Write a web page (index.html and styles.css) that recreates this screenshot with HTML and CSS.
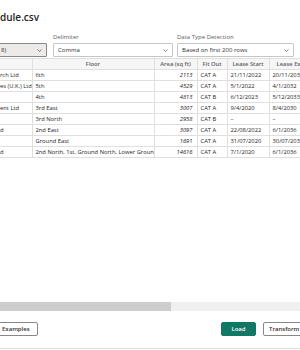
FILE: index.html
```html
<!DOCTYPE html>
<html lang="en">

<head>
    <meta charset="UTF-8">
    <meta name="viewport" content="width=device-width, initial-scale=1.0">
    <title>dule.csv</title>
    <link rel="stylesheet" href="styles.css">
</head>

<body>
    <div class="dialog">
        <h1 class="title">dule.csv</h1>

        <!-- file origin / delimiter / detection -->
        <div class="options">
            <div class="field origin">
                <label>&nbsp;</label>
                <div class="select focused">
                    <span>8)</span>
                    <svg class="caret" width="5" height="3" viewBox="0 0 5 3"><path d="M0.5 0.5 L2.5 2.5 L4.5 0.5" fill="none" stroke="#605e5c" stroke-width="0.8"/></svg>
                </div>
            </div>
            <div class="field delimiter">
                <label>Delimiter</label>
                <div class="select">
                    <span>Comma</span>
                    <svg class="caret" width="5" height="3" viewBox="0 0 5 3"><path d="M0.5 0.5 L2.5 2.5 L4.5 0.5" fill="none" stroke="#605e5c" stroke-width="0.8"/></svg>
                </div>
            </div>
            <div class="field detection">
                <label>Data Type Detection</label>
                <div class="select">
                    <span>Based on first 200 rows</span>
                    <svg class="caret" width="5" height="3" viewBox="0 0 5 3"><path d="M0.5 0.5 L2.5 2.5 L4.5 0.5" fill="none" stroke="#605e5c" stroke-width="0.8"/></svg>
                </div>
            </div>
        </div>

        <div class="preview">
            <table class="grid">
                <colgroup>
                    <col class="c-tenant">
                    <col class="c-floor">
                    <col class="c-area">
                    <col class="c-fit">
                    <col class="c-start">
                    <col class="c-expiry">
                </colgroup>
                <thead>
                    <tr>
                        <th class="first"></th>
                        <th>Floor</th>
                        <th>Area (sq ft)</th>
                        <th>Fit Out</th>
                        <th>Lease Start</th>
                        <th>Lease Expiry</th>
                    </tr>
                </thead>
                <tbody>
                    <tr>
                        <td class="first">rch Ltd</td>
                        <td>6th</td>
                        <td class="num">2113</td>
                        <td>CAT A</td>
                        <td>21/11/2022</td>
                        <td>20/11/2032</td>
                    </tr>
                    <tr>
                        <td class="first">es (U.K.) Ltd</td>
                        <td>5th</td>
                        <td class="num">4529</td>
                        <td>CAT A</td>
                        <td>5/1/2022</td>
                        <td>4/1/2032</td>
                    </tr>
                    <tr>
                        <td class="first"></td>
                        <td>4th</td>
                        <td class="num">4813</td>
                        <td>CAT B</td>
                        <td>6/12/2023</td>
                        <td>5/12/2033</td>
                    </tr>
                    <tr>
                        <td class="first">ent Ltd</td>
                        <td>3rd East</td>
                        <td class="num">3007</td>
                        <td>CAT A</td>
                        <td>9/4/2020</td>
                        <td>8/4/2030</td>
                    </tr>
                    <tr>
                        <td class="first"></td>
                        <td>3rd North</td>
                        <td class="num">2958</td>
                        <td>CAT B</td>
                        <td>–</td>
                        <td>–</td>
                    </tr>
                    <tr>
                        <td class="first">d</td>
                        <td>2nd East</td>
                        <td class="num">3097</td>
                        <td>CAT A</td>
                        <td>22/08/2022</td>
                        <td>6/1/2036</td>
                    </tr>
                    <tr>
                        <td class="first"></td>
                        <td>Ground East</td>
                        <td class="num">1691</td>
                        <td>CAT A</td>
                        <td>31/07/2020</td>
                        <td>30/07/2030</td>
                    </tr>
                    <tr>
                        <td class="first">d</td>
                        <td>2nd North, 1st, Ground North, Lower Ground</td>
                        <td class="num">14616</td>
                        <td>CAT A</td>
                        <td>7/1/2020</td>
                        <td>6/1/2036</td>
                    </tr>
                </tbody>
            </table>
        </div>

        <div class="hscroll">
            <div class="thumb"></div>
        </div>

        <div class="footer">
            <button class="btn examples">Examples</button>
            <div class="actions">
                <button class="btn primary">Load</button>
                <button class="btn transform">Transform Data</button>
            </div>
        </div>
    </div>
</body>

</html>
```

FILE: styles.css
```css
* {
    padding: 0;
    margin: 0;
    box-sizing: border-box;
}

body {
    width: 300px;
    height: 350px;
    overflow: hidden;
    background-color: #fff;
    color: #252423;
    font-family: "Open Sans", "Noto Sans", sans-serif;
}

.dialog {
    width: 340px;
    height: 350px;
    display: flex;
    flex-direction: column;
}

.title {
    padding-top: 11px;
    font-size: 10px;
    font-weight: 600;
    line-height: 13px;
    color: #252423;
}

.options {
    display: flex;
    margin-top: 9px;
}

.field label {
    display: block;
    height: 10px;
    font-size: 6px;
    line-height: 8px;
    color: #605e5c;
}

.field.origin {
    width: 67px;
    margin-left: -20px;
}

.field.delimiter {
    width: 120px;
    margin-left: 6px;
}

.field.detection {
    width: 117px;
    margin-left: 4px;
}

.select {
    display: flex;
    align-items: center;
    justify-content: space-between;
    height: 14px;
    padding: 0 4px 0 4px;
    border: 1px solid #c8c6c4;
    border-radius: 1px;
    background-color: #fff;
    font-size: 6px;
    line-height: 12px;
    color: #323130;
}

.select.focused {
    padding-left: 20px;
    border-color: #8a8886;
    background-color: #edebe9;
}

.preview {
    height: 244px;
    margin-top: 1px;
}

.grid {
    width: 319px;
    table-layout: fixed;
    border-collapse: collapse;
    font-size: 5.8px;
    line-height: 10px;
}

.grid .c-tenant { width: 32px; }
.grid .c-floor { width: 122px; }
.grid .c-area { width: 43px; }
.grid .c-fit { width: 30px; }
.grid .c-start { width: 42px; }
.grid .c-expiry { width: 50px; }

.grid th,
.grid td {
    height: 11px;
    padding: 0 3px;
    border: 1px solid #e1dfdd;
    white-space: nowrap;
    overflow: hidden;
    text-align: left;
}

.grid th {
    background-color: #f6f6f6;
    font-weight: 600;
    color: #605e5c;
    text-align: center;
}

.grid .first {
    padding-left: 0;
    border-left: none;
}

.grid td.num {
    font-style: italic;
    text-align: right;
    padding-right: 4px;
}

.hscroll {
    height: 9px;
    background-color: #f0f0f0;
}

.hscroll .thumb {
    width: 171px;
    height: 100%;
    background-color: #cdcdcd;
}

.footer {
    display: flex;
    align-items: flex-start;
    height: 38px;
    padding-top: 11px;
    border-bottom: 1px solid #e1dfdd;
}

.btn {
    height: 14px;
    padding: 0 5px;
    border: 1px solid #8a8886;
    border-radius: 2px;
    background-color: #fff;
    font-family: "Open Sans", "Noto Sans", sans-serif;
    font-size: 6px;
    font-weight: 600;
    line-height: 12px;
    color: #323130;
}

.btn.examples {
    width: 50px;
    margin-left: -12px;
    padding-left: 13px;
    padding-right: 0;
    text-align: left;
}

.actions {
    display: flex;
    margin-left: 183px;
    gap: 7px;
}

.btn.primary {
    width: 35px;
    border-color: #117865;
    background-color: #117865;
    color: #fff;
}

.btn.transform {
    padding-left: 5px;
}
```
